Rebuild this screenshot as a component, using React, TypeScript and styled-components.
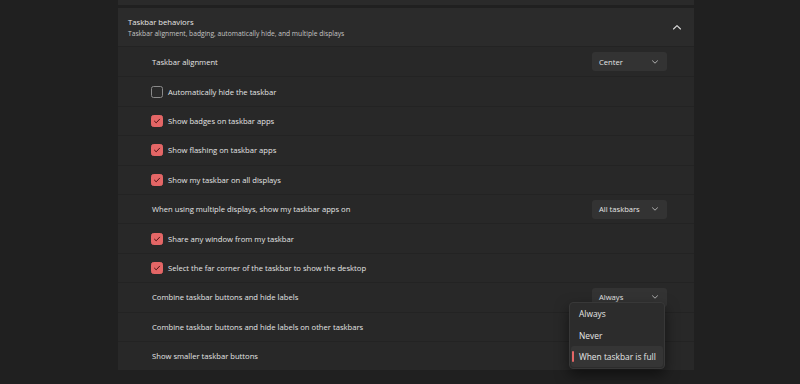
import React from "react";
import styled, { createGlobalStyle } from "styled-components";

const Global = createGlobalStyle`
  html, body { margin: 0; padding: 0; background: #202020; }
  body { font-family: "Open Sans", "Noto Sans", sans-serif; color: #e4e4e4; }
  #root { width: 800px; height: 384px; overflow: hidden; }
`;

const Page = styled.div`
  width: 800px;
  height: 384px;
  background: #202020;
  display: flex;
  justify-content: flex-start;
  padding-left: 118px;
  box-sizing: border-box;
`;

const Column = styled.div`
  width: 576px;
  display: flex;
  flex-direction: column;
`;

const PrevCard = styled.div`
  height: 5px;
  background: #2a2a2a;
  margin-bottom: 3px;
`;

const Header = styled.div`
  height: 38px;
  background: #2b2b2b;
  display: flex;
  align-items: center;
  padding: 0 12px 0 10px;
  box-sizing: border-box;
`;

const HeaderText = styled.div`
  flex: 1;
  display: flex;
  flex-direction: column;
  gap: 1px;
  margin-top: 2px;
`;

const Title = styled.div`
  font-size: 7.7px;
  color: #e8e8e8;
  line-height: 11px;
`;

const Subtitle = styled.div`
  font-size: 6.7px;
  color: #c4c4c4;
  line-height: 10px;
`;

const Body = styled.div`
  background: #282828;
  display: flex;
  flex-direction: column;
  border-top: 1px solid #232323;
`;

const Row = styled.div`
  height: 29.4px;
  display: flex;
  align-items: center;
  padding: 0 27px 0 34px;
  box-sizing: border-box;
  position: relative;
  & + & { border-top: 1px solid #232323; }
`;

const Label = styled.span`
  flex: 1;
  font-size: 7.65px;
  color: #e4e4e4;
`;

const Box = styled.span<{ $checked?: boolean }>`
  width: 12px;
  height: 12px;
  box-sizing: border-box;
  border-radius: 2.5px;
  margin: 0 5px 0 -1px;
  display: inline-flex;
  align-items: center;
  justify-content: center;
  background: ${(p) => (p.$checked ? "#e46666" : "#2a2a2a")};
  border: 1px solid ${(p) => (p.$checked ? "#e46666" : "#8a8a8a")};
`;

const Select = styled.div`
  width: 75px;
  height: 19px;
  background: #333333;
  border-radius: 3px;
  display: flex;
  align-items: center;
  padding: 0 8px 0 7px;
  box-sizing: border-box;
  font-size: 7.6px;
  color: #e6e6e6;
  & > span { flex: 1; }
`;

const Menu = styled.div`
  position: absolute;
  right: 29px;
  top: 19px;
  width: 96px;
  background: #2c2c2c;
  border: 1px solid #383838;
  border-radius: 4px;
  box-shadow: 0 6px 14px rgba(0, 0, 0, 0.5);
  display: flex;
  flex-direction: column;
  padding: 0 1px 1px;
  box-sizing: border-box;
  z-index: 5;
`;

const MenuItem = styled.div<{ $selected?: boolean }>`
  height: 21.3px;
  display: flex;
  align-items: center;
  padding-left: 8px;
  font-size: 8.4px;
  color: #e6e6e6;
  border-radius: 3px;
  position: relative;
  background: ${(p) => (p.$selected ? "#353535" : "transparent")};
  ${(p) =>
    p.$selected &&
    `&::before { content: ""; position: absolute; left: 1px; top: 5px; width: 2px; height: 11px; border-radius: 1px; background: #e46666; }`}
`;

const Check = () => (
  <svg width="8" height="8" viewBox="0 0 8 8">
    <path d="M1.5 4.2 L3.2 5.8 L6.6 2.2" fill="none" stroke="#4a1212" strokeWidth="1" strokeLinecap="round" strokeLinejoin="round" />
  </svg>
);

const ChevronDown = () => (
  <svg width="8" height="6" viewBox="0 0 8 6">
    <path d="M1.5 1.8 L4 4.2 L6.5 1.8" fill="none" stroke="#bdbdbd" strokeWidth="0.9" strokeLinecap="round" strokeLinejoin="round" />
  </svg>
);

const ChevronUp = () => (
  <svg width="10" height="7" viewBox="0 0 10 7">
    <path d="M1.5 5 L5 1.7 L8.5 5" fill="none" stroke="#dcdcdc" strokeWidth="1.1" strokeLinecap="round" strokeLinejoin="round" />
  </svg>
);

type Item =
  | { kind: "select"; label: string; value: string; menu?: boolean }
  | { kind: "check"; label: string; checked: boolean }
  | { kind: "plain"; label: string };

const items: Item[] = [
  { kind: "select", label: "Taskbar alignment", value: "Center" },
  { kind: "check", label: "Automatically hide the taskbar", checked: false },
  { kind: "check", label: "Show badges on taskbar apps", checked: true },
  { kind: "check", label: "Show flashing on taskbar apps", checked: true },
  { kind: "check", label: "Show my taskbar on all displays", checked: true },
  { kind: "select", label: "When using multiple displays, show my taskbar apps on", value: "All taskbars" },
  { kind: "check", label: "Share any window from my taskbar", checked: true },
  { kind: "check", label: "Select the far corner of the taskbar to show the desktop", checked: true },
  { kind: "select", label: "Combine taskbar buttons and hide labels", value: "Always", menu: true },
  { kind: "plain", label: "Combine taskbar buttons and hide labels on other taskbars" },
  { kind: "plain", label: "Show smaller taskbar buttons" },
];

export default function App() {
  return (
    <>
      <Global />
      <Page>
        <Column>
          <PrevCard />
          <Header>
            <HeaderText>
              <Title>Taskbar behaviors</Title>
              <Subtitle>Taskbar alignment, badging, automatically hide, and multiple displays</Subtitle>
            </HeaderText>
            <ChevronUp />
          </Header>
          <Body>
            {items.map((it, i) => (
              <Row key={i}>
                {it.kind === "check" && <Box $checked={it.checked}>{it.checked && <Check />}</Box>}
                <Label>{it.label}</Label>
                {it.kind === "select" && (
                  <Select>
                    <span>{it.value}</span>
                    <ChevronDown />
                  </Select>
                )}
                {it.kind === "select" && it.menu && (
                  <Menu>
                    <MenuItem>Always</MenuItem>
                    <MenuItem>Never</MenuItem>
                    <MenuItem $selected>When taskbar is full</MenuItem>
                  </Menu>
                )}
              </Row>
            ))}
          </Body>
        </Column>
      </Page>
    </>
  );
}
